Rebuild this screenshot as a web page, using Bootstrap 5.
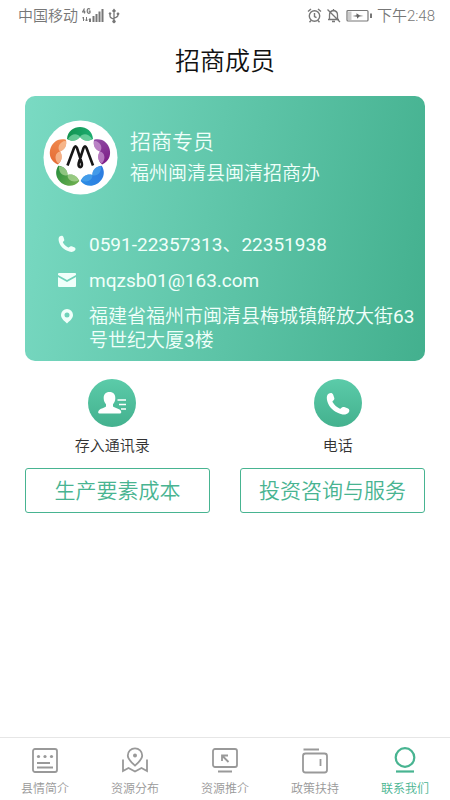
<!DOCTYPE html>
<html lang="zh-CN">
<head>
<meta charset="utf-8">
<meta name="viewport" content="width=device-width, initial-scale=1">
<title>招商成员</title>
<link href="https://cdn.jsdelivr.net/npm/bootstrap@5.3.0/dist/css/bootstrap.min.css" rel="stylesheet">
<style>
  :root { --brand: #48b491; --muted: #999; }
  body { font-family: Roboto, "Noto Sans CJK SC", sans-serif; color: #222; font-weight: 350; }
  .status { height: 32px; padding: 0 15px 0 18px; font-size: 15px; line-height: 32px; color: #777; }
  .page-title { font-size: 25px; line-height: 32px; font-weight: 350; color: #111; padding: 14px 0 18px; }
  .content { padding: 0 25px; }
  .member { border-radius: 10px; color: #f0fffa; padding: 24px 0 8px 18px; background: linear-gradient(100deg, #7adac3 0%, #43b08e 100%); }
  .avatar { width: 75px; height: 75px; }
  .role { font-size: 21px; line-height: 32px; }
  .org { font-size: 19px; line-height: 32px; }
  .contact { font-size: 19px; line-height: 24px; gap: 12px; margin-top: 38px; padding-left: 15px; }
  .contact li { gap: 13px; }
  .contact svg { width: 18px; height: 18px; margin-top: 2px; }
  .latin { font-weight: 400; }
  .quick { font-size: 15px; line-height: 22px; color: #333; padding-top: 18px; }
  .quick button { color: inherit; gap: 8px; font-weight: inherit; }
  .round-icon { width: 48px; height: 48px; }
  .choices { column-gap: 30px; margin-top: 11px; }
  .choices .btn { --bs-btn-color: #48b491; --bs-btn-border-color: #48b491; --bs-btn-hover-bg: #48b491; --bs-btn-hover-color: #fff; font-size: 21px; line-height: 31px; font-weight: 350; border-radius: 3px; padding: 7px 0 5px; }
  .tabs { border-top: 1px solid #e6e6e6; padding: 8px 0 1px; background: #fff; }
  .tabs a { color: var(--muted); font-size: 12px; line-height: 20px; gap: 3px; }
  .tabs a.active { color: var(--brand); }
  .tabs svg { width: 30px; height: 30px; }
</style>
<script src="https://cdn.jsdelivr.net/npm/bootstrap@5.3.0/dist/js/bootstrap.bundle.min.js"></script>
</head>
<body class="d-flex flex-column min-vh-100 bg-white">

<svg class="d-none" aria-hidden="true">
  <symbol id="handset" viewBox="0 0 20 20"><path fill="currentColor" d="M2.100 1.500C3.600.3 5.300.5 6 2.200l.9 2.700c.3 1-.2 1.700-1.100 2.300-.5.4-.5.9-.2 1.400 1.500 2.600 3.200 4 5.700 5.200.6.3 1 .1 1.400-.4.7-.9 1.500-1.200 2.500-.8l2.700 1c1.900.7 2 2.400.8 3.700-1.900 2-5.100 2-9 0C5 15.200 1.600 11.200.8 6.400.5 4.200.7 2.600 2.100 1.500z"/></symbol>
</svg>

<header>
  <div class="status d-flex justify-content-between">
    <div class="d-flex align-items-center">
      <span>中国移动</span>
      <svg class="ms-1" width="40" height="18" viewBox="0 0 40 18" aria-label="4G 信号 USB" fill="none" stroke="#777">
        <path d="M2.500 1.500L.5 5h3M2.500 3.500v3M8 2.200C6.500.8 5.200 2 5.200 4S6.500 7 8 5.800V4.200H6.700" stroke-width="1.200"/>
        <path d="M1.500 10v4M0 11.500L1.500 10M4.500 10v4M3 12.500L4.500 14L6 12.500" stroke-width="1"/>
        <path d="M8 11.500V15M11.500 9V15M14.500 7V15M17.500 4.500V15M20.500 2V15" stroke-width="2"/>
        <path d="M32 3v12M28 6v3q0 2 4 3M36 6v2q0 2-4 3M30.500 4.500L32 2.500l1.500 2" stroke-width="1.300"/><circle cx="32" cy="14.500" r="1.300" fill="#777"/><circle cx="28" cy="6.500" r=".8" fill="#777"/><path d="M35.200 6h1.600v1.500h-1.600z" fill="#777"/>
      </svg>
    </div>
    <div class="d-flex align-items-center">
      <svg class="me-1" width="66" height="16" viewBox="0 0 66 16" aria-label="闹钟 静音 充电" fill="none" stroke="#777" stroke-width="1.400">
        <circle cx="7.500" cy="8" r="5.200"/><path d="M7.500 5V8.500l2 1.200M1 3.500L4 1M11 1L14 3.500M4 12.500l-1.500 1.700M11 12.500l1.500 1.700"/>
        <path d="M21 11.500h11M22.500 11.500V7q0-4 4-4.500 4 .5 4 4.500V11.500M25 13.500h3M26.500 1V2.500M20.500 1.500L33 14" stroke-width="1.300"/>
        <rect x="40" y="2.500" width="21" height="10.500" rx="1" stroke-width="1.200"/><path d="M41 3.500h3.500V12H41z" fill="#ccc" stroke="none"/><path d="M45.500 8l4-.8V5.300l3 2 4 .7-4 .5-2.500 2.200V8.800z" fill="#666" stroke="none"/><path d="M64 5.500V10" stroke-width="2"/>
      </svg>
      <span>下午2:48</span>
    </div>
  </div>
  <h1 class="page-title text-center m-0">招商成员</h1>
</header>

<main class="content flex-grow-1">
  <section class="member">
    <div class="d-flex align-items-center">
      <svg class="avatar flex-shrink-0" viewBox="0 0 75 75" role="img" aria-label="闽清标志">
        <defs>
          <linearGradient id="g1"><stop stop-color="#12924f"/><stop offset="1" stop-color="#1dad70"/></linearGradient>
          <linearGradient id="g2"><stop stop-color="#8f4aa3"/><stop offset="1" stop-color="#7d1b86"/></linearGradient>
          <linearGradient id="g3"><stop stop-color="#2d7be0"/><stop offset="1" stop-color="#2c8be4"/></linearGradient>
          <linearGradient id="g4"><stop stop-color="#6fb050"/><stop offset="1" stop-color="#298e3d"/></linearGradient>
          <linearGradient id="g5"><stop stop-color="#e56c35"/><stop offset="1" stop-color="#f08a4e"/></linearGradient>
          <path id="petal" d="M-13-19C-12-35 12-35 13-19 8-16 3-17 0-21-3-17-8-16-13-19z"/>
          <path id="sheen" opacity=".65" d="M-12-19C-9-25-2-25 0-21-3-17-8-16-12-19zM12-19C9-25 2-25 0-21 3-17 8-16 12-19z"/>
        </defs>
        <circle cx="37.500" cy="37.500" r="37" fill="#fff"/>
        <g transform="translate(37 38)">
          <g><use href="#petal" fill="url(#g1)"/><use href="#sheen" fill="#8de0b4"/></g>
          <g transform="rotate(72)"><use href="#petal" fill="url(#g2)"/><use href="#sheen" fill="#d3a5da"/></g>
          <g transform="rotate(144)"><use href="#petal" fill="url(#g3)"/><use href="#sheen" fill="#4fa8ec"/></g>
          <g transform="rotate(216)"><use href="#petal" fill="url(#g4)"/><use href="#sheen" fill="#b9dba0"/></g>
          <g transform="rotate(288)"><use href="#petal" fill="url(#g5)"/><use href="#sheen" fill="#fbcfac"/></g>
        </g>
        <path d="M24.500 45.500L31 28Q32.500 24.500 34 28L38.800 43C40 48.500 34.500 48.500 35.700 43L40.500 28Q42 24.500 43.500 28L50 45.500" fill="none" stroke="#171717" stroke-width="2.600"/>
      </svg>
      <div class="ps-2 ms-1">
        <div class="role">招商专员</div>
        <div class="org">福州闽清县闽清招商办</div>
      </div>
    </div>
    <ul class="contact list-unstyled d-flex flex-column mb-0">
      <li class="d-flex"><svg class="flex-shrink-0" aria-hidden="true"><use href="#handset"/></svg><span class="latin">0591-22357313、22351938</span></li>
      <li class="d-flex"><svg class="flex-shrink-0" viewBox="0 0 18 18" fill="currentColor" aria-hidden="true"><path d="M1 2h16q1 0 1 1v1L9 9 0 4V3q0-1 1-1zM0 6l9 5 9-5v9q0 1-1 1H1q-1 0-1-1z"/></svg><span class="latin">mqzsb01@163.com</span></li>
      <li class="d-flex"><svg class="flex-shrink-0" viewBox="0 0 18 18" fill="currentColor" aria-hidden="true"><path fill-rule="evenodd" d="M9 2a6 6 0 0 1 6 6C15 11.500 11.500 14 9 16.500 6.500 14 3 11.500 3 8a6 6 0 0 1 6-6zm0 3.500a2.500 2.500 0 1 0 0 5 2.500 2.500 0 0 0 0-5z"/></svg><span>福建省福州市闽清县梅城镇解放大街<span class="latin">63</span>号世纪大厦<span class="latin">3</span>楼</span></li>
    </ul>
  </section>

  <section class="quick d-flex justify-content-between">
    <button type="button" class="border-0 bg-transparent p-0 d-flex flex-column align-items-center col-5 ms-1">
      <svg class="round-icon" viewBox="0 0 48 48" aria-hidden="true"><defs><linearGradient id="disc" x2="0" y2="1"><stop stop-color="#5bcba9"/><stop offset="1" stop-color="#43b18e"/></linearGradient></defs><circle cx="24" cy="24" r="24" fill="url(#disc)"/><path fill="#fff" d="M21.500 13c4 0 6 2.500 5.800 6.500-.1 2.500-1 4.300-2.300 5.700v2.300c2 1.600 7 2 8 4.500.5 1.300.3 2.500-1 2.500H11.500c-1.500 0-1.600-1.300-1-2.500 1.200-2.500 5.700-3 7.500-4.500v-2.300c-1.300-1.400-2.200-3.200-2.300-5.700C15.500 15.500 17.500 13 21.500 13z"/><path d="M29.500 21H38M31 25.500h7M33 30h5" stroke="#fff" stroke-width="1.500"/></svg>
      <span>存入通讯录</span>
    </button>
    <button type="button" class="border-0 bg-transparent p-0 d-flex flex-column align-items-center col-5 me-1">
      <svg class="round-icon" viewBox="0 0 48 48" aria-hidden="true"><circle cx="24" cy="24" r="24" fill="url(#disc)"/><use href="#handset" x="12" y="13" width="24" height="24" color="#fff"/></svg>
      <span>电话</span>
    </button>
  </section>

  <section class="choices d-flex">
    <button type="button" class="btn btn-outline-success flex-fill w-50">生产要素成本</button>
    <button type="button" class="btn btn-outline-success flex-fill w-50">投资咨询与服务</button>
  </section>
</main>

<nav class="tabs d-flex sticky-bottom" aria-label="主导航">
  <a href="#intro" class="col text-decoration-none d-flex flex-column align-items-center">
    <svg viewBox="0 0 30 30" fill="none" stroke="currentColor" stroke-width="1.800" aria-hidden="true"><rect x="3" y="3" width="24" height="23" rx="2"/><path d="M7 17h13M7 21.500h16"/><g fill="currentColor" stroke="none"><circle cx="8.500" cy="10.500" r="1.600"/><circle cx="15" cy="10.500" r="1.600"/><circle cx="21.500" cy="10.500" r="1.600"/></g></svg>
    <span>县情简介</span></a>
  <a href="#map" class="col text-decoration-none d-flex flex-column align-items-center">
    <svg viewBox="0 0 30 30" fill="none" stroke="currentColor" stroke-width="1.800" aria-hidden="true"><path d="M15 19.500C11 16 7.800 13.500 7.800 9.500a7.200 7.200 0 0 1 14.400 0c0 4-3.200 6.500-7.200 10z"/><circle cx="15" cy="9.500" r="2" fill="currentColor" stroke="none"/><path d="M3 13.500V25l5.500-3 6.500 3.500 6.500-3.500 5.500 3V13.500"/></svg>
    <span>资源分布</span></a>
  <a href="#promo" class="col text-decoration-none d-flex flex-column align-items-center">
    <svg viewBox="0 0 30 30" fill="none" stroke="currentColor" stroke-width="1.800" aria-hidden="true"><rect x="3" y="3" width="24" height="18" rx="2"/><path d="M8 25.500h14M12 15V9.500h6M12.500 10l6 6"/></svg>
    <span>资源推介</span></a>
  <a href="#policy" class="col text-decoration-none d-flex flex-column align-items-center">
    <svg viewBox="0 0 30 30" fill="none" stroke="currentColor" stroke-width="1.800" aria-hidden="true"><rect x="3" y="7.500" width="24" height="19" rx="2.500"/><path d="M3.500 3.500H19M20.500 13v7"/></svg>
    <span>政策扶持</span></a>
  <a href="#contact" class="active col text-decoration-none d-flex flex-column align-items-center" aria-current="page">
    <svg viewBox="0 0 30 30" fill="none" stroke="currentColor" stroke-width="2.200" aria-hidden="true"><circle cx="15" cy="11.500" r="9.300"/><path d="M6 25.500h18"/></svg>
    <span>联系我们</span></a>
</nav>
</body>
</html>
